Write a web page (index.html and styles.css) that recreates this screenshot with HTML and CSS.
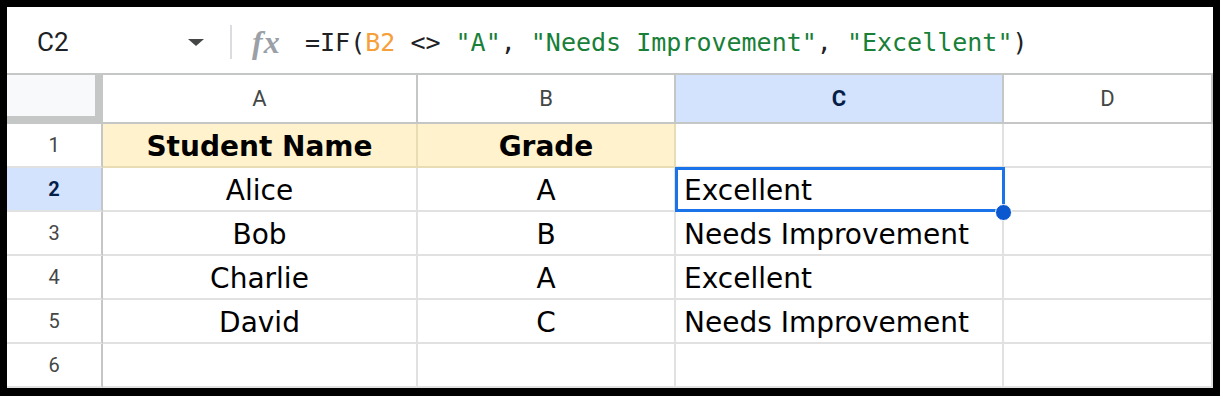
FILE: index.html
```html
<!DOCTYPE html>
<html lang="en">
  <head>
    <meta charset="UTF-8" />
    <meta name="viewport" content="width=device-width, initial-scale=1.0" />
    <title>IF formula - Sheets</title>
    <link rel="stylesheet" href="styles.css">
  </head>
  <body>
    <div class="sheet">
      <!-- formula bar -->
      <div class="formula-bar">
        <div class="name-box">
          <span class="cell-ref">C2</span>
          <span class="caret"></span>
        </div>
        <div class="divider"></div>
        <span class="fx">fx</span>
        <div class="formula">=IF(<span class="ref">B2</span> &lt;&gt; <span class="str">"A"</span>, <span class="str">"Needs Improvement"</span>, <span class="str">"Excellent"</span>)</div>
      </div>

      <!-- grid -->
      <div class="grid">
        <div class="corner"></div>
        <div class="col-head">A</div>
        <div class="col-head">B</div>
        <div class="col-head active">C</div>
        <div class="col-head">D</div>

        <div class="row-head">1</div>
        <div class="cell head-fill center"><b>Student Name</b></div>
        <div class="cell head-fill center"><b>Grade</b></div>
        <div class="cell"></div>
        <div class="cell"></div>

        <div class="row-head active">2</div>
        <div class="cell center">Alice</div>
        <div class="cell center">A</div>
        <div class="cell selected">Excellent</div>
        <div class="cell"></div>

        <div class="row-head">3</div>
        <div class="cell center">Bob</div>
        <div class="cell center">B</div>
        <div class="cell">Needs Improvement</div>
        <div class="cell"></div>

        <div class="row-head">4</div>
        <div class="cell center">Charlie</div>
        <div class="cell center">A</div>
        <div class="cell">Excellent</div>
        <div class="cell"></div>

        <div class="row-head">5</div>
        <div class="cell center">David</div>
        <div class="cell center">C</div>
        <div class="cell">Needs Improvement</div>
        <div class="cell"></div>

        <div class="row-head">6</div>
        <div class="cell"></div>
        <div class="cell"></div>
        <div class="cell"></div>
        <div class="cell"></div>
      </div>
    </div>
  </body>
</html>
```

FILE: styles.css
```css
* {
  box-sizing: border-box;
}

body {
  margin: 0;
  background-color: #000;
  font-family: Roboto, "Liberation Sans", Arial, sans-serif;
}

.sheet {
  margin: 7px 7px 8px 7px;
  width: 1206px;
  height: 381px;
  background-color: #fff;
  overflow: hidden;
}

/* formula bar */
.formula-bar {
  height: 66px;
  padding-top: 4px;
  display: flex;
  align-items: center;
}

.name-box {
  width: 212px;
  padding: 0 15px 0 30px;
  display: flex;
  align-items: center;
  justify-content: space-between;
}

.cell-ref {
  font-size: 26px;
  color: #202124;
}

.caret {
  width: 0;
  height: 0;
  border-left: 8px solid transparent;
  border-right: 8px solid transparent;
  border-top: 7px solid #444746;
}

.divider {
  margin-left: 11px;
  width: 2px;
  height: 34px;
  background-color: #dadce0;
}

.fx {
  margin-left: 20px;
  width: 30px;
  font-family: "Liberation Serif", serif;
  font-style: italic;
  font-weight: bold;
  font-size: 32px;
  color: #9aa0a6;
  letter-spacing: 1px;
}

.formula {
  margin-left: 23px;
  font-family: "DejaVu Sans Mono", "Liberation Mono", monospace;
  font-size: 25px;
  color: #202124;
  white-space: pre;
}

.formula .ref {
  color: #f6a03a;
}

.formula .str {
  color: #188038;
}

/* grid */
.grid {
  display: grid;
  grid-template-columns: 96px 315px 258px 328px 209px;
  grid-template-rows: 51px repeat(6, 44px);
}

.corner {
  background-color: #f8f9fa;
  border-top: 2px solid #c4c7c5;
  border-right: 8px solid #c4c7c5;
  border-bottom: 8px solid #c4c7c5;
}

.col-head {
  display: flex;
  align-items: center;
  justify-content: center;
  font-size: 22px;
  color: #444746;
  border-top: 2px solid #c4c7c5;
  border-right: 2px solid #c4c7c5;
  border-bottom: 2px solid #c4c7c5;
}

.row-head {
  display: flex;
  align-items: center;
  justify-content: center;
  font-size: 20px;
  color: #444746;
  border-right: 2px solid #c4c7c5;
  border-bottom: 2px solid #e1e1e1;
}

.col-head.active,
.row-head.active {
  background-color: #d3e3fd;
  color: #041e49;
  font-weight: bold;
}

.cell {
  display: flex;
  align-items: center;
  padding: 3px 0 0 8px;
  font-family: "DejaVu Sans", Verdana, sans-serif;
  font-size: 28px;
  color: #000;
  white-space: nowrap;
  border-right: 2px solid #e1e1e1;
  border-bottom: 2px solid #e1e1e1;
}

.cell.center {
  justify-content: center;
  padding-left: 0;
}

.cell.head-fill {
  background-color: #fff2cc;
  border-color: #e8dcb4;
}

.cell.selected {
  position: relative;
}

.cell.selected::before {
  content: "";
  position: absolute;
  left: -1px;
  top: -1px;
  right: -3px;
  bottom: -2px;
  border: 3px solid #1a73e8;
  z-index: 1;
}

.cell.selected::after {
  content: "";
  position: absolute;
  right: -10px;
  bottom: -11px;
  width: 15px;
  height: 15px;
  box-sizing: content-box;
  border: 1px solid #fff;
  border-radius: 50%;
  background-color: #0b57d0;
  z-index: 2;
}
```
